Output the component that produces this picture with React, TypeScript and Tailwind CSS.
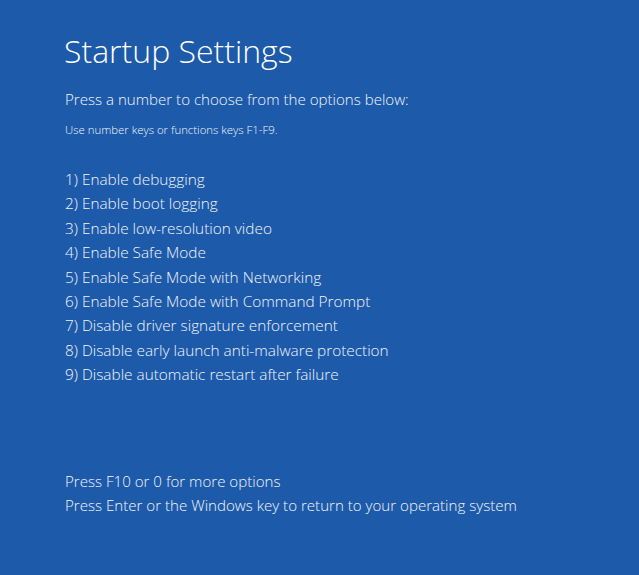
export default function App() {
  const items = [
    "1) Enable debugging",
    "2) Enable boot logging",
    "3) Enable low-resolution video",
    "4) Enable Safe Mode",
    "5) Enable Safe Mode with Networking",
    "6) Enable Safe Mode with Command Prompt",
    "7) Disable driver signature enforcement",
    "8) Disable early launch anti-malware protection",
    "9) Disable automatic restart after failure",
  ];
  return (
    <div
      className="w-[639px] h-[575px] bg-[#1d5aa9] text-white flex flex-col pl-[64px]"
      style={{ fontFamily: '"Open Sans", "Noto Sans", sans-serif' }}
    >
      <div className="pt-[29px] text-[32px] leading-[44px] font-light">Startup Settings</div>
      <div className="pl-px flex flex-col font-light">
        <div className="mt-[15px] text-[15.1px] leading-[22px] text-[#f2f5fa]">
          Press a number to choose from the options below:
        </div>
        <div className="mt-[12px] text-[11.4px] leading-[16px] text-[#f2f5fa]">
          Use number keys or functions keys F1-F9.
        </div>
        <div className="mt-[29px] flex flex-col text-[15.35px] leading-[24.4px] text-[#f2f5fa]">
          {items.map((t) => (
            <div key={t}>{t}</div>
          ))}
        </div>
        <div className="mt-[82px] flex flex-col text-[15.1px] leading-[24.4px] text-[#f2f5fa]">
          <div>Press F10 or 0 for more options</div>
          <div>Press Enter or the Windows key to return to your operating system</div>
        </div>
      </div>
    </div>
  );
}
